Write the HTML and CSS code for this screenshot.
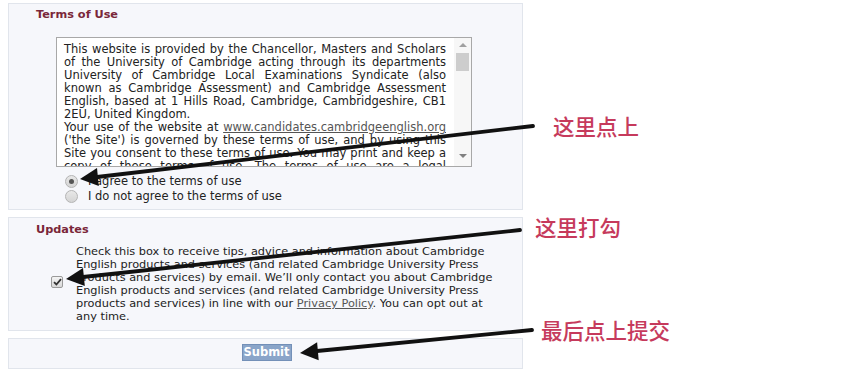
FILE: index.html
```html
<!DOCTYPE html>
<html>
<head>
<meta charset="utf-8">
<link rel="stylesheet" href="styles.css">
</head>
<body>
<div class="page">
  <div class="panel panel-terms">
    <h2 class="heading">Terms of Use</h2>
    <div class="tos-box">
      <div class="tos-text">
        <span class="jl">This website is provided by the Chancellor, Masters and Scholars</span>
        <span class="jl">of the University of Cambridge acting through its departments</span>
        <span class="jl">University of Cambridge Local Examinations Syndicate (also</span>
        <span class="jl">known as Cambridge Assessment) and Cambridge Assessment</span>
        <span class="jl">English, based at 1 Hills Road, Cambridge, Cambridgeshire, CB1</span>
        <span class="ll">2EU, United Kingdom.</span>
        <span class="jl">Your use of the website at <a class="link" href="#">www.candidates.cambridgeenglish.org</a></span>
        <span class="jl">('the Site') is governed by these terms of use, and by using this</span>
        <span class="jl">Site you consent to these terms of use. You may print and keep a</span>
        <span class="jl">copy of these terms of use. The terms of use are a legal</span>
        <span class="jl">agreement between you and the University of Cambridge.</span>
      </div>
      <div class="scrollbar">
        <span class="arrow-up"></span>
        <span class="thumb"></span>
        <span class="track"></span>
        <span class="arrow-down"></span>
      </div>
    </div>
    <div class="radios">
      <label class="radio-row"><span class="radio checked"><span class="dot"></span></span><span>I agree to the terms of use</span></label>
      <label class="radio-row"><span class="radio"></span><span>I do not agree to the terms of use</span></label>
    </div>
  </div>

  <div class="panel panel-updates">
    <h2 class="heading">Updates</h2>
    <div class="updates-row">
      <div class="check-cell">
        <span class="checkbox">
          <svg width="9" height="8" viewBox="0 0 9 8"><path d="M1 4.2 L3.4 6.5 L8 1.2" fill="none" stroke="#333" stroke-width="1.8"/></svg>
        </span>
      </div>
      <div class="updates-text">
        <span class="ln">Check this box to receive tips, advice and information about Cambridge</span>
        <span class="ln">English products and services (and related Cambridge University Press</span>
        <span class="ln">products and services) by email. We’ll only contact you about Cambridge</span>
        <span class="ln">English products and services (and related Cambridge University Press</span>
        <span class="ln">products and services) in line with our <a class="link" href="#">Privacy Policy</a>. You can opt out at</span>
        <span class="ln">any time.</span>
      </div>
    </div>
  </div>

  <div class="panel panel-submit">
    <button class="submit" type="button">Submit</button>
  </div>

  <div class="annotations">
    <svg class="arrows" width="854" height="381" viewBox="0 0 854 381">
      <line x1="533" y1="126" x2="97" y2="177" stroke="#111" stroke-width="3.8" stroke-linecap="round"/>
      <polygon points="80,179 98.8,186 97,168" fill="#111"/>
      <line x1="520" y1="230" x2="83" y2="277" stroke="#111" stroke-width="3.8" stroke-linecap="round"/>
      <polygon points="66,279 84.8,286 83,268" fill="#111"/>
      <line x1="532" y1="330" x2="317" y2="351" stroke="#111" stroke-width="3.8" stroke-linecap="round"/>
      <polygon points="300,353 318.7,360.2 317.1,342.2" fill="#111"/>
    </svg>
    <div class="note note-1">这里点上</div>
    <div class="note note-2">这里打勾</div>
    <div class="note note-3">最后点上提交</div>
  </div>
</div>
</body>
</html>
```

FILE: styles.css
```css
* { box-sizing: border-box; }

html, body {
  margin: 0;
  padding: 0;
  background: #ffffff;
}

body {
  font-family: "DejaVu Sans", Verdana, sans-serif;
  font-size: 11.5px;
  color: #222;
  width: 854px;
  height: 381px;
  overflow: hidden;
}

.page {
  position: relative;
  width: 854px;
  height: 381px;
  padding: 3px 0 0 8px;
  display: flex;
  flex-direction: column;
  gap: 7px;
}

.panel {
  width: 515px;
  background: #f6f7fb;
  border: 1px solid #e1e5ec;
  padding-left: 27px;
}

.heading {
  margin: 0;
  font-size: 11.3px;
  line-height: 14px;
  font-weight: bold;
  color: #7a2739;
}

/* Terms panel */
.panel-terms {
  height: 207px;
  padding-top: 4px;
}

.tos-box {
  margin: 15px 0 0 20px;
  width: 416px;
  height: 130px;
  background: #fff;
  border: 1px solid #a8a8a8;
  display: flex;
}

.tos-text {
  flex: 1;
  overflow: hidden;
  padding: 5px 8px 0 7px;
  line-height: 13px;
}

.jl, .ll {
  display: block;
  white-space: nowrap;
}

.jl {
  text-align: justify;
  text-align-last: justify;
  white-space: normal;
}

.link {
  color: #555;
  text-decoration: underline;
}

.scrollbar {
  width: 17px;
  background: #f7f7f7;
  display: flex;
  flex-direction: column;
  align-items: center;
}

.arrow-up {
  margin-top: 5px;
  width: 0;
  height: 0;
  border-left: 4px solid transparent;
  border-right: 4px solid transparent;
  border-bottom: 4px solid #a0a0a0;
}

.thumb {
  margin-top: 6px;
  width: 13px;
  height: 18px;
  background: #cdcdcd;
}

.track { flex: 1; }

.arrow-down {
  margin-bottom: 8px;
  width: 0;
  height: 0;
  border-left: 4px solid transparent;
  border-right: 4px solid transparent;
  border-top: 4px solid #808080;
}

.radios {
  margin: 7px 0 0 29px;
  display: flex;
  flex-direction: column;
}

.radio-row {
  height: 15px;
  display: flex;
  align-items: center;
  gap: 10px;
  line-height: 15px;
}

.radio {
  width: 13px;
  height: 13px;
  border-radius: 50%;
  border: 1px solid #b4b4b4;
  background: linear-gradient(#e8e8e8, #d4d4d4);
  display: flex;
  align-items: center;
  justify-content: center;
}

.radio .dot {
  width: 5px;
  height: 5px;
  border-radius: 50%;
  background: #555;
}

/* Updates panel */
.panel-updates {
  height: 114px;
  padding-top: 5px;
}

.updates-row {
  margin-top: 8px;
  display: flex;
  align-items: center;
}

.check-cell {
  width: 40px;
  padding-left: 15px;
  padding-bottom: 5px;
  display: flex;
}

.checkbox {
  width: 12px;
  height: 12px;
  border: 1px solid #9a9a9a;
  border-radius: 2px;
  background: linear-gradient(#f4f4f4, #d8d8d8);
  display: flex;
  align-items: center;
  justify-content: center;
}

.updates-text {
  font-size: 11.35px;
  line-height: 13px;
}

.ln {
  display: block;
  white-space: nowrap;
}

/* Submit panel */
.panel-submit {
  height: 31px;
  padding: 5px 0 0 0;
  display: flex;
  justify-content: center;
  align-items: flex-start;
}

.submit {
  margin-left: 2px;
  width: 50px;
  height: 17px;
  padding: 0;
  border: 1px solid #7390b8;
  background: #8aa5c9;
  color: #fff;
  font-family: "DejaVu Sans", Verdana, sans-serif;
  font-weight: bold;
  font-size: 11.5px;
  line-height: 15px;
}

/* Annotation overlay */
.annotations {
  position: absolute;
  left: 0;
  top: 0;
  width: 854px;
  height: 381px;
  pointer-events: none;
}

.arrows {
  position: absolute;
  left: 0;
  top: 0;
}

.note {
  position: absolute;
  font-family: "Noto Sans CJK SC", sans-serif;
  font-size: 21.5px;
  line-height: 24px;
  font-weight: 500;
  color: #c63a5c;
  white-space: nowrap;
}

.note-1 { left: 553px; top: 114px; }
.note-2 { left: 535px; top: 215px; }
.note-3 { left: 541px; top: 318px; }
```
